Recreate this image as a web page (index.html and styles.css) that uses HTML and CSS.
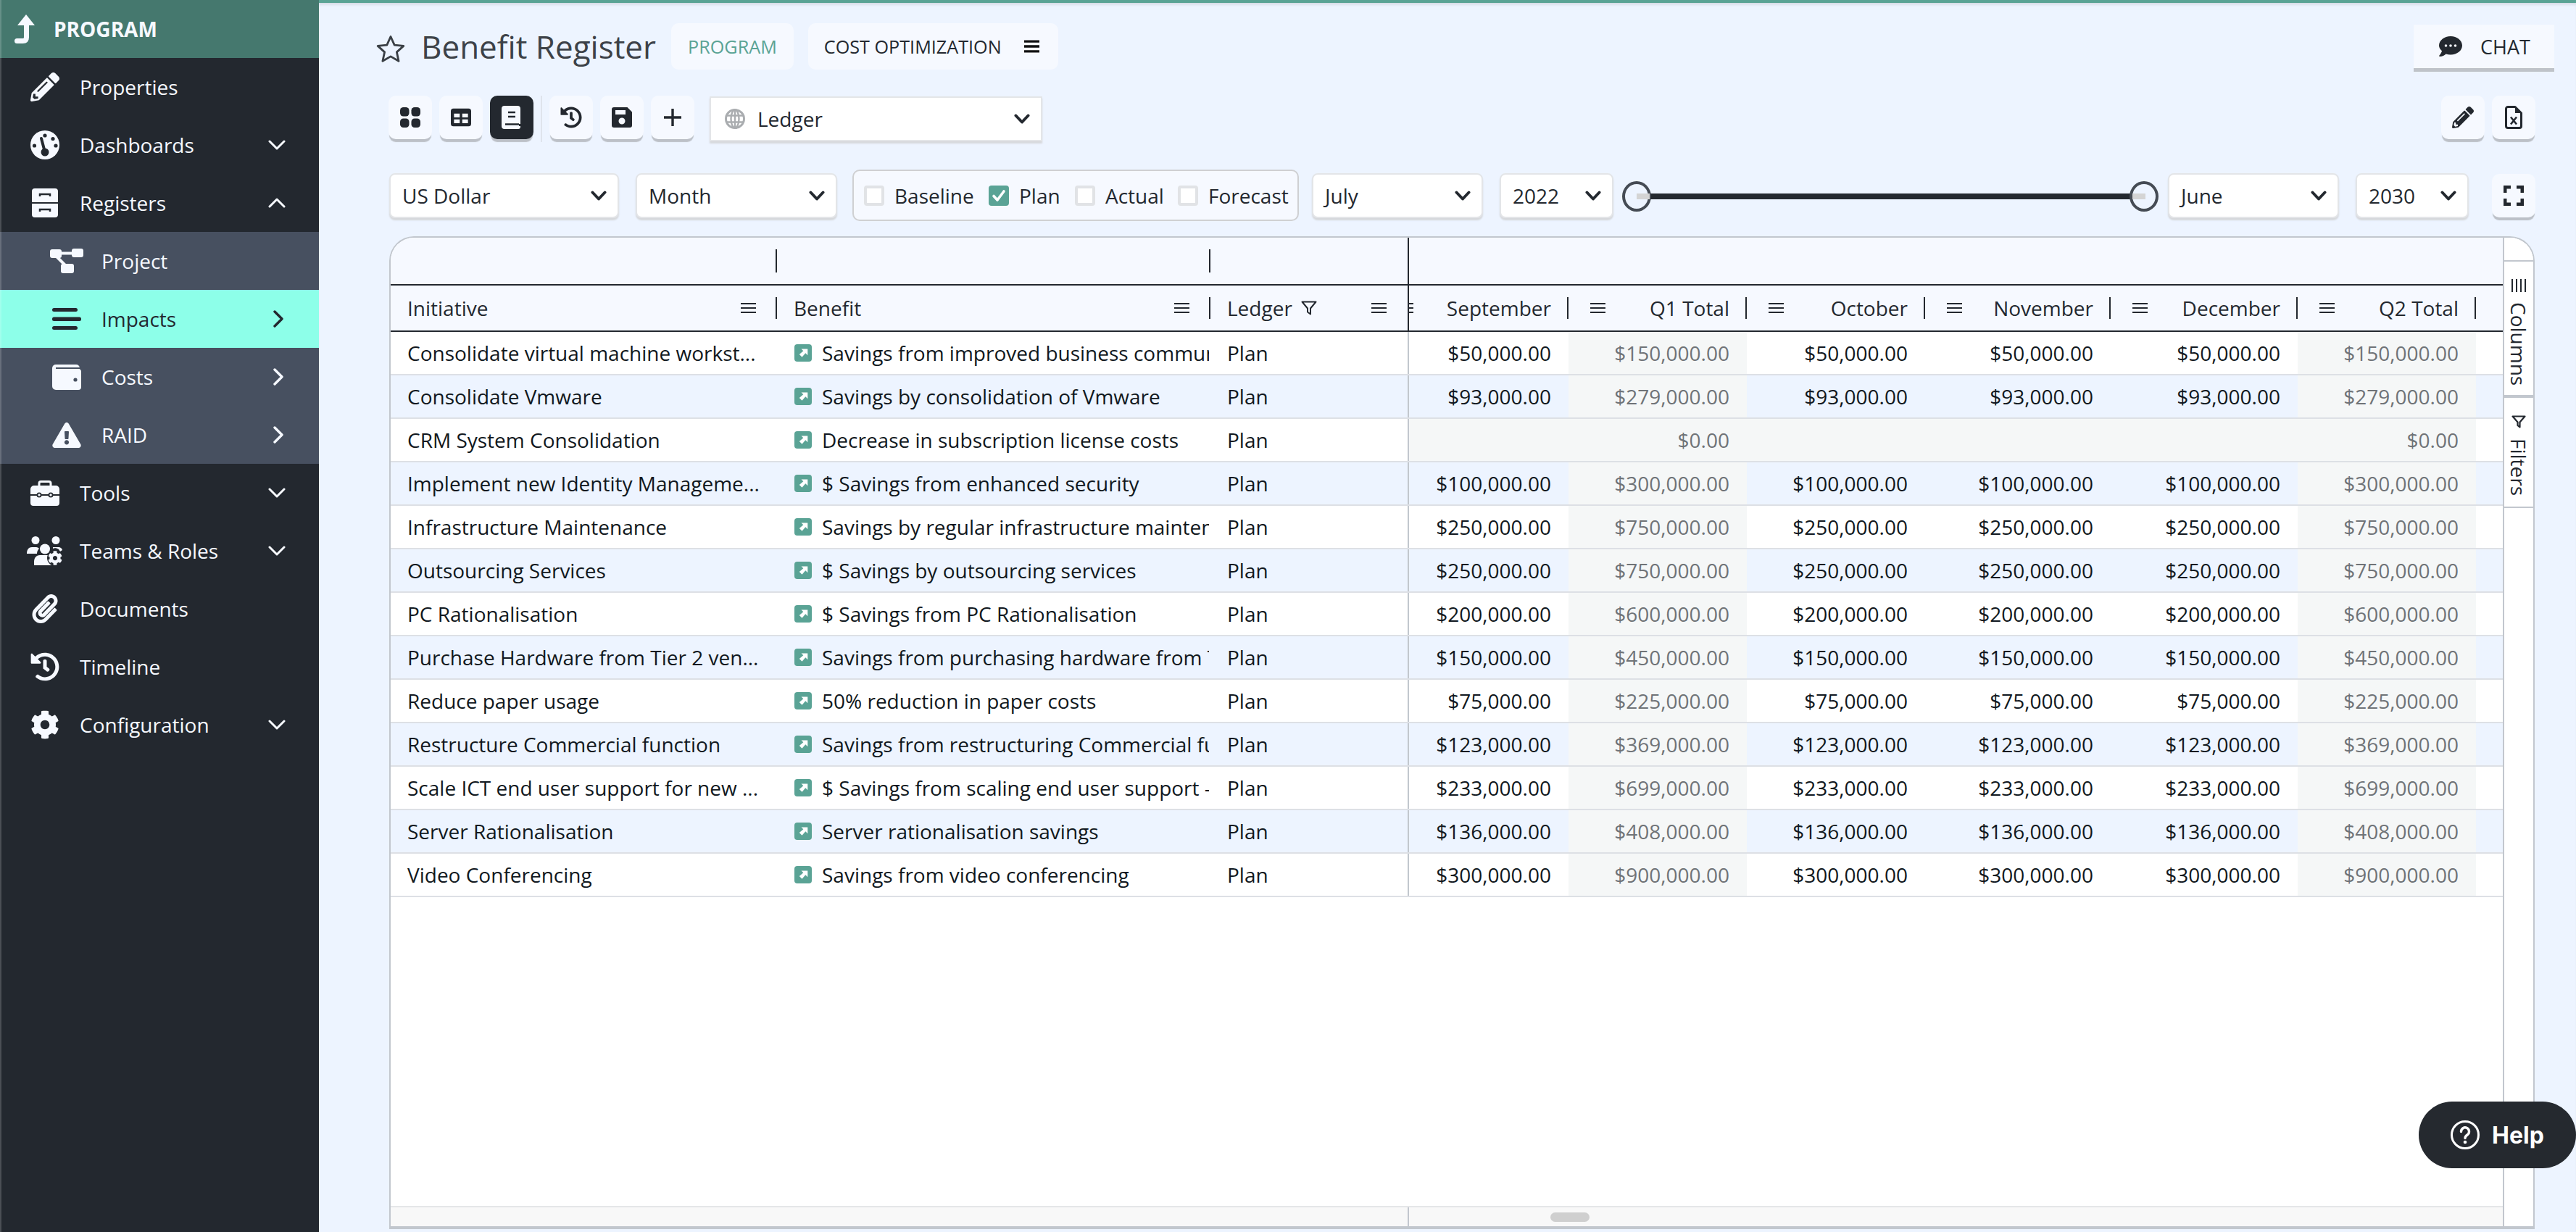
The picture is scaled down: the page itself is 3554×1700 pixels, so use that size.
FILE: index.html
```html
<!DOCTYPE html>
<html lang="en">
<head>
<meta charset="utf-8">
<title>Benefit Register</title>
<link rel="stylesheet" href="styles.css">
</head>
<body>
<svg class="defs" aria-hidden="true">
  <symbol id="i-pencil" viewBox="0 0 512 512"><path fill="currentColor" d="M497.9 142.1l-46.1 46.1c-4.7 4.7-12.3 4.7-17 0l-111-111c-4.7-4.7-4.7-12.3 0-17l46.1-46.1c18.7-18.7 49.1-18.7 67.9 0l60.1 60.1c18.8 18.7 18.8 49.1 0 67.9zM284.2 99.8L21.6 362.4.4 483.9c-2.9 16.4 11.4 30.6 27.8 27.8l121.5-21.3 262.6-262.6c4.7-4.7 4.7-12.3 0-17l-111-111c-4.8-4.7-12.4-4.7-17.1 0zM124.1 339.9c-5.5-5.5-5.5-14.3 0-19.8l154-154c5.5-5.5 14.3-5.5 19.8 0s5.5 14.3 0 19.8l-154 154c-5.5 5.5-14.3 5.5-19.8 0zM88 424h48v36.3l-64.5 11.3-31.1-31.1L51.7 376H88v48z"/></symbol>
  <symbol id="i-cog" viewBox="0 0 512 512"><path fill="currentColor" d="M487.4 315.7l-42.6-24.6c4.3-23.2 4.3-47 0-70.2l42.6-24.6c4.9-2.8 7.1-8.6 5.5-14-11.1-35.6-30-67.8-54.7-94.6-3.8-4.1-10-5.1-14.8-2.3L380.8 110c-17.9-15.4-38.5-27.3-60.8-35.1V25.8c0-5.6-3.9-10.5-9.4-11.7-36.7-8.2-74.3-7.8-109.2 0-5.5 1.2-9.4 6.1-9.4 11.7V75c-22.2 7.9-42.8 19.8-60.8 35.1L88.7 85.5c-4.9-2.8-11-1.9-14.8 2.3-24.7 26.7-43.6 58.9-54.7 94.6-1.7 5.4.6 11.2 5.5 14L67.3 221c-4.3 23.2-4.3 47 0 70.2l-42.6 24.6c-4.9 2.8-7.1 8.6-5.5 14 11.1 35.6 30 67.8 54.7 94.6 3.8 4.1 10 5.1 14.8 2.3l42.6-24.6c17.9 15.4 38.5 27.3 60.8 35.1v49.2c0 5.6 3.9 10.5 9.4 11.7 36.7 8.2 74.3 7.8 109.2 0 5.5-1.2 9.4-6.1 9.4-11.7v-49.2c22.2-7.9 42.8-19.8 60.8-35.1l42.6 24.6c4.9 2.8 11 1.9 14.8-2.3 24.7-26.7 43.6-58.9 54.7-94.6 1.5-5.5-.7-11.3-5.6-14.1zM256 336c-44.1 0-80-35.9-80-80s35.9-80 80-80 80 35.9 80 80-35.9 80-80 80z"/></symbol>
  <symbol id="i-history" viewBox="0 0 512 512"><path fill="currentColor" d="M504 255.531c.253 136.64-111.18 248.372-247.82 248.468-59.015.042-113.223-20.53-155.822-54.911-11.077-8.94-11.905-25.541-1.839-35.607l11.267-11.267c8.609-8.609 22.353-9.551 31.891-1.984C173.062 425.135 212.781 440 256 440c101.705 0 184-82.311 184-184 0-101.705-82.311-184-184-184-48.814 0-93.149 18.969-126.068 49.932l50.754 50.754c10.08 10.08 2.941 27.314-11.313 27.314H24c-8.837 0-16-7.163-16-16V38.627c0-14.254 17.234-21.393 27.314-11.314l49.372 49.372C129.209 34.136 189.552 8 256 8c136.81 0 247.747 110.78 248 247.531zm-180.912 78.784l9.823-12.63c8.138-10.463 6.253-25.542-4.21-33.679L288 256.349V152c0-13.255-10.745-24-24-24h-16c-13.255 0-24 10.745-24 24v135.651l65.409 50.874c10.463 8.137 25.541 6.253 33.679-4.21z"/></symbol>
  <symbol id="i-clip" viewBox="0 0 448 512"><path fill="currentColor" d="M43.246 466.142c-58.43-60.289-57.341-157.511 1.386-217.581L254.392 34c44.316-45.332 116.351-45.336 160.671 0 43.89 44.894 43.943 117.329 0 162.276L232.214 383.128c-29.855 30.537-78.633 30.111-107.982-.998-28.275-29.97-27.368-77.473 1.452-106.953l143.743-146.835c6.182-6.314 16.312-6.422 22.626-.241l22.861 22.379c6.315 6.182 6.422 16.312.241 22.626L171.427 319.927c-4.932 5.045-5.236 13.428-.648 18.292 4.372 4.634 11.245 4.711 15.688.165l182.849-186.851c19.613-20.062 19.613-52.725-.011-72.798-19.189-19.627-49.957-19.637-69.154 0L90.39 293.295c-34.763 35.56-35.299 93.12-1.191 128.313 34.01 35.093 88.985 35.137 123.058.286l172.06-175.999c6.177-6.319 16.307-6.433 22.626-.256l22.877 22.364c6.319 6.177 6.434 16.307.256 22.626l-172.06 175.998c-59.576 60.938-155.943 60.216-214.77-.485z"/></symbol>
  <symbol id="i-warn" viewBox="0 0 576 512"><path fill="currentColor" d="M569.517 440.013C587.975 472.007 564.806 512 527.94 512H48.054c-36.937 0-59.999-40.055-41.577-71.987L246.423 23.985c18.467-32.009 64.72-31.951 83.154 0l239.94 416.028zM288 354c-25.405 0-46 20.595-46 46s20.595 46 46 46 46-20.595 46-46-20.595-46-46-46zm-43.673-165.346l7.418 136c.347 6.364 5.609 11.346 11.982 11.346h48.546c6.373 0 11.635-4.982 11.982-11.346l7.418-136c.375-6.874-5.098-12.654-11.982-12.654h-63.383c-6.884 0-12.356 5.78-11.981 12.654z"/></symbol>
  <symbol id="i-down" viewBox="0 0 24 14"><path fill="none" stroke="currentColor" stroke-width="3" stroke-linecap="round" stroke-linejoin="round" d="M2 2l10 10L22 2"/></symbol>
  <symbol id="i-up" viewBox="0 0 24 14"><path fill="none" stroke="currentColor" stroke-width="3" stroke-linecap="round" stroke-linejoin="round" d="M2 12L12 2l10 10"/></symbol>
  <symbol id="i-right" viewBox="0 0 14 24"><path fill="none" stroke="currentColor" stroke-width="3.4" stroke-linecap="round" stroke-linejoin="round" d="M2 2l10 10L2 22"/></symbol>
  <symbol id="i-sel" viewBox="0 0 22 14"><path fill="none" stroke="currentColor" stroke-width="4" stroke-linecap="round" stroke-linejoin="round" d="M2.5 2.5L11 11.5l8.5-9"/></symbol>
  <symbol id="i-menu" viewBox="0 0 21 14"><path fill="currentColor" d="M0 0h21v2H0zM0 6h21v2H0zM0 12h21v2H0z"/></symbol>
  <symbol id="i-link" viewBox="0 0 24 24"><rect width="24" height="24" rx="4" fill="#5aa395"/><path fill="#fff" d="M9.500 6.500h8.800v8.800l-3-3-4.800 5.500-3.700-3.700 5.500-4.800z"/></symbol>
</svg>

<aside class="sidebar">
  <div class="brand">
    <svg class="brand-icon" viewBox="0 0 28 40"><path fill="none" stroke="currentColor" stroke-width="7" stroke-linecap="round" stroke-linejoin="round" d="M3.500 36.500h8q5 0 5-5V12"/><path fill="currentColor" d="M16 0l12 15H4z"/></svg>
    <span>PROGRAM</span>
  </div>
  <nav class="nav">
    <a class="nav-item"><span class="nav-icon"><svg class="ic-40"><use href="#i-pencil"/></svg></span><span class="nav-label">Properties</span></a>
    <a class="nav-item"><span class="nav-icon"><svg class="ic-40" viewBox="0 0 40 40"><circle cx="20" cy="20" r="20" fill="currentColor"/><circle cx="20" cy="7" r="2.600" fill="#23282f"/><circle cx="31" cy="11.500" r="2.600" fill="#23282f"/><circle cx="35" cy="21" r="2.600" fill="#23282f"/><circle cx="5.500" cy="21" r="2.600" fill="#23282f"/><circle cx="20" cy="30" r="5.500" fill="#23282f"/><path stroke="#23282f" stroke-width="4" stroke-linecap="round" d="M20 30L15 11"/></svg></span><span class="nav-label">Dashboards</span><svg class="chev"><use href="#i-down"/></svg></a>
    <a class="nav-item"><span class="nav-icon"><svg class="ic-reg" viewBox="0 0 36 40"><path fill="currentColor" d="M4 0h28a4 4 0 0 1 4 4v15H0V4a4 4 0 0 1 4-4zM0 21h36v15a4 4 0 0 1-4 4H4a4 4 0 0 1-4-4z"/><path fill="none" stroke="#23282f" stroke-width="2.500" d="M11 11V8h14v3M11 32v-3h14v3"/></svg></span><span class="nav-label">Registers</span><svg class="chev"><use href="#i-up"/></svg></a>
    <a class="nav-item sub"><span class="nav-icon"><svg class="ic-proj" viewBox="0 0 46 34"><rect y="1" width="16" height="12" rx="3" fill="currentColor"/><rect x="30" width="16" height="12" rx="3" fill="currentColor"/><rect x="15" y="21" width="18" height="13" rx="3" fill="currentColor"/><path stroke="currentColor" stroke-width="4" d="M14 6.500h18M8 10l14 14"/></svg></span><span class="nav-label">Project</span></a>
    <a class="nav-item sub active"><span class="nav-icon"><svg class="ic-bars" viewBox="0 0 40 30"><rect width="35" height="5" rx="2.500" fill="currentColor"/><rect y="12.500" width="40" height="5.500" rx="2.500" fill="currentColor"/><rect y="25" width="35" height="5" rx="2.500" fill="currentColor"/></svg></span><span class="nav-label">Impacts</span><svg class="chev-r"><use href="#i-right"/></svg></a>
    <a class="nav-item sub"><span class="nav-icon"><svg class="ic-wallet" viewBox="0 0 40 35"><rect width="38" height="14" rx="5" fill="currentColor"/><path stroke="#475060" stroke-width="2" d="M5 5h35"/><path fill="currentColor" d="M0 6h36a4 4 0 0 1 4 4v21a4 4 0 0 1-4 4H5a5 5 0 0 1-5-5z"/><circle cx="32" cy="21" r="2.600" fill="#475060"/></svg></span><span class="nav-label">Costs</span><svg class="chev-r"><use href="#i-right"/></svg></a>
    <a class="nav-item sub"><span class="nav-icon"><svg class="ic-wallet"><use href="#i-warn"/></svg></span><span class="nav-label">RAID</span><svg class="chev-r"><use href="#i-right"/></svg></a>
    <a class="nav-item"><span class="nav-icon"><svg class="ic-wallet" viewBox="0 0 40 35"><path fill="none" stroke="currentColor" stroke-width="3" d="M12 9V4a2.500 2.500 0 0 1 2.500-2.500h11A2.500 2.500 0 0 1 28 4v5"/><path fill="currentColor" d="M5 7h30a5 5 0 0 1 5 5v7H0v-7a5 5 0 0 1 5-5zM0 21h40v10a4 4 0 0 1-4 4H4a4 4 0 0 1-4-4z"/><circle cx="12" cy="20" r="3.500" fill="#23282f"/><circle cx="28" cy="20" r="3.500" fill="#23282f"/><circle cx="12" cy="20" r="1.700" fill="currentColor"/><circle cx="28" cy="20" r="1.700" fill="currentColor"/></svg></span><span class="nav-label">Tools</span><svg class="chev"><use href="#i-down"/></svg></a>
    <a class="nav-item"><span class="nav-icon"><svg class="ic-team" viewBox="0 0 50 40"><circle cx="12" cy="5.500" r="5.500" fill="currentColor"/><circle cx="40" cy="5.500" r="5.500" fill="currentColor"/><path fill="currentColor" d="M0 24c0-6 3-9 7-9h6c2 0 3 1 4 2-2 2-3 4-3 7zM36 15h8c2 0 4 1 5 4l-3 2-2-3c-3-2-6-2-8-1z"/><circle cx="25" cy="17.500" r="7" fill="currentColor"/><path fill="currentColor" d="M10 40v-5c0-6 4-9 8-9h14c1 0 2 0 3 1v13z"/><circle cx="39" cy="30" r="11" fill="#23282f"/><svg x="29" y="20" width="20" height="20"><use href="#i-cog"/></svg></svg></span><span class="nav-label">Teams &amp; Roles</span><svg class="chev"><use href="#i-down"/></svg></a>
    <a class="nav-item"><span class="nav-icon"><svg class="ic-40"><use href="#i-clip"/></svg></span><span class="nav-label">Documents</span></a>
    <a class="nav-item"><span class="nav-icon"><svg class="ic-40"><use href="#i-history"/></svg></span><span class="nav-label">Timeline</span></a>
    <a class="nav-item"><span class="nav-icon"><svg class="ic-40"><use href="#i-cog"/></svg></span><span class="nav-label">Configuration</span><svg class="chev"><use href="#i-down"/></svg></a>
  </nav>
</aside>

<main class="content">
  <header class="titlebar">
    <svg class="star" viewBox="0 0 40 38"><path fill="none" stroke="currentColor" stroke-width="2.800" stroke-linejoin="round" d="M20 2.500l5.200 11.600 12.600 1.300-9.400 8.500 2.600 12.400L20 29.900 8.900 36.300l2.700-12.400-9.400-8.500 12.600-1.300z"/></svg>
    <h1 class="title">Benefit Register</h1>
    <div class="pill pill-green">PROGRAM</div>
    <div class="pill pill-cost"><span>COST OPTIMIZATION</span><svg class="pill-menu" viewBox="0 0 22 18"><path fill="currentColor" d="M0 0h22v3.500H0zM0 7.250h22v3.500H0zM0 14.500h22V18H0z"/></svg></div>
    <button class="chat"><svg class="chat-ic" viewBox="0 0 32 28"><path fill="currentColor" d="M16 0c8.800 0 16 5.700 16 12.800S24.800 25.500 16 25.500c-2.300 0-4.400-.4-6.400-1.100C7.800 26 4.600 28 1 28c-.4 0-.7-.2-.8-.5s0-.7.200-.9c.1-.1 2.800-3 3.600-6.300C1.500 18 0 15.500 0 12.800 0 5.700 7.200 0 16 0z"/><circle cx="9.500" cy="13" r="1.800" fill="#f6f9ff"/><circle cx="16" cy="13" r="1.800" fill="#f6f9ff"/><circle cx="22.500" cy="13" r="1.800" fill="#f6f9ff"/></svg><span>CHAT</span></button>
  </header>

  <div class="toolbar">
    <button class="iconbtn"><svg class="ic-28" viewBox="0 0 28 28"><rect width="12.500" height="12.500" rx="4.500" fill="currentColor"/><rect x="15.500" width="12.500" height="12.500" rx="4.500" fill="currentColor"/><rect y="15.500" width="12.500" height="12.500" rx="4.500" fill="currentColor"/><rect x="15.500" y="15.500" width="12.500" height="12.500" rx="4.500" fill="currentColor"/></svg></button>
    <button class="iconbtn"><svg class="ic-28" viewBox="0 0 32 28"><path fill="currentColor" fill-rule="evenodd" d="M4 0h24a4 4 0 0 1 4 4v20a4 4 0 0 1-4 4H4a4 4 0 0 1-4-4V4a4 4 0 0 1 4-4zM5 8v6h9V8zM18 8v6h9V8zM5 17v6h9v-6zM18 17v6h9v-6z"/></svg></button>
    <button class="iconbtn on"><svg class="ic-book" viewBox="0 0 28 32"><path fill="currentColor" d="M4 0h18a4 4 0 0 1 4 4v21h-2v3h2v1a3 3 0 0 1-3 3H4a4 4 0 0 1-4-4V4a4 4 0 0 1 4-4z"/><path stroke="#23282f" stroke-width="2.400" d="M9 9h10M9 15h10M5 25.500h19"/></svg></button>
    <span class="divider"></span>
    <button class="iconbtn"><svg class="ic-30"><use href="#i-history"/></svg></button>
    <button class="iconbtn"><svg class="ic-28" viewBox="0 0 28 28"><path fill="currentColor" fill-rule="evenodd" d="M3 0h18.500L28 6.500V25a3 3 0 0 1-3 3H3a3 3 0 0 1-3-3V3a3 3 0 0 1 3-3zM5 4v6h14V4zM14 14.500a4.500 4.500 0 1 0 0 9 4.500 4.500 0 0 0 0-9z"/></svg></button>
    <button class="iconbtn"><svg class="ic-28" viewBox="0 0 28 28"><path fill="currentColor" d="M12.300 2h3.400v10.300H26v3.400H15.700V26h-3.400V15.700H2v-3.400h10.300z"/></svg></button>
    <div class="select ledger"><svg class="globe" viewBox="0 0 28 28"><circle cx="14" cy="14" r="12.500" fill="none" stroke="#aaadb0" stroke-width="3"/><ellipse cx="14" cy="14" rx="5.500" ry="12.500" fill="none" stroke="#aaadb0" stroke-width="2.400"/><path stroke="#aaadb0" stroke-width="2.400" d="M2 9.500h24M2 18.500h24M14 1v26"/></svg><span class="sel-text">Ledger</span><svg class="sel-chev"><use href="#i-sel"/></svg></div>
    <div class="tool-right">
      <button class="iconbtn"><svg class="ic-30"><use href="#i-pencil"/></svg></button>
      <button class="iconbtn"><svg class="ic-file" viewBox="0 0 24 32"><path fill="none" stroke="currentColor" stroke-width="3" stroke-linejoin="round" d="M4 1.500h10L22.500 10v18a2.500 2.500 0 0 1-2.500 2.500H4A2.500 2.500 0 0 1 1.500 28V4A2.500 2.500 0 0 1 4 1.500z"/><path fill="currentColor" d="M14 1.500V10h8.500z"/><path stroke="currentColor" stroke-width="2.600" d="M8 15.500l8 10M16 15.500l-8 10"/></svg></button>
    </div>
  </div>

  <div class="filters">
    <div class="select w-cur"><span class="sel-text">US Dollar</span><svg class="sel-chev"><use href="#i-sel"/></svg></div>
    <div class="select w-per"><span class="sel-text">Month</span><svg class="sel-chev"><use href="#i-sel"/></svg></div>
    <div class="checks">
      <label class="check"><span class="box"></span>Baseline</label>
      <label class="check"><span class="box checked"><svg viewBox="0 0 28 28"><path fill="none" stroke="#fff" stroke-width="3.600" stroke-linecap="round" stroke-linejoin="round" d="M7 14.500l5 5.500 9-12"/></svg></span>Plan</label>
      <label class="check"><span class="box"></span>Actual</label>
      <label class="check"><span class="box"></span>Forecast</label>
    </div>
    <div class="select w-mon1"><span class="sel-text">July</span><svg class="sel-chev"><use href="#i-sel"/></svg></div>
    <div class="select w-yr1"><span class="sel-text">2022</span><svg class="sel-chev"><use href="#i-sel"/></svg></div>
    <div class="slider"><span class="handle h-left"></span><span class="track"></span><span class="handle h-right"></span></div>
    <div class="select w-mon2"><span class="sel-text">June</span><svg class="sel-chev"><use href="#i-sel"/></svg></div>
    <div class="select w-yr2"><span class="sel-text">2030</span><svg class="sel-chev"><use href="#i-sel"/></svg></div>
    <button class="iconbtn fs"><svg class="ic-28" viewBox="0 0 28 28"><path fill="none" stroke="currentColor" stroke-width="4.500" d="M2.250 10V2.250H10M18 2.250h7.750V10M25.750 18v7.750H18M10 25.750H2.250V18"/></svg></button>
  </div>

  <section class="grid">
    <div class="grid-main">
      <div class="group-row">
        <div class="pin dark"><div class="gcell c-init"><i class="sep sep-g"></i></div><div class="gcell c-ben"><i class="sep sep-g"></i></div><div class="gcell c-led"></div></div>
        <div class="center"></div>
      </div>
      <div class="head-row">
        <div class="pin dark">
          <div class="hcell c-init"><span class="hlabel">Initiative</span><svg class="hmenu"><use href="#i-menu"/></svg><i class="sep"></i></div>
          <div class="hcell c-ben"><span class="hlabel">Benefit</span><svg class="hmenu"><use href="#i-menu"/></svg><i class="sep"></i></div>
          <div class="hcell c-led"><span class="hlabel">Ledger</span><svg class="hfilter" viewBox="0 0 22 20"><path fill="none" stroke="currentColor" stroke-width="2" stroke-linejoin="round" d="M1.500 1.500h19L13 10.500v8l-4-3v-5z"/></svg><svg class="hmenu led-menu"><use href="#i-menu"/></svg></div>
        </div>
        <div class="center">
          <div class="hcell r c-sep"><svg class="hmenu-l"><use href="#i-menu"/></svg><span class="hlabel">September</span><i class="sep"></i></div>
          <div class="hcell r c-q"><svg class="hmenu-l"><use href="#i-menu"/></svg><span class="hlabel">Q1 Total</span><i class="sep"></i></div>
          <div class="hcell r c-q"><svg class="hmenu-l"><use href="#i-menu"/></svg><span class="hlabel">October</span><i class="sep"></i></div>
          <div class="hcell r c-nov"><svg class="hmenu-l"><use href="#i-menu"/></svg><span class="hlabel">November</span><i class="sep"></i></div>
          <div class="hcell r c-dec"><svg class="hmenu-l"><use href="#i-menu"/></svg><span class="hlabel">December</span><i class="sep"></i></div>
          <div class="hcell r c-q"><svg class="hmenu-l"><use href="#i-menu"/></svg><span class="hlabel">Q2 Total</span><i class="sep"></i></div>
          <div class="hcell c-rest"><svg class="hmenu-l"><use href="#i-menu"/></svg></div>
        </div>
      </div>

      <div class="row">
        <div class="pin"><div class="cell c-init">Consolidate virtual machine workst...</div><div class="cell c-ben"><svg class="link"><use href="#i-link"/></svg><span class="clip">Savings from improved business communi</span></div><div class="cell c-led">Plan</div></div>
        <div class="center"><div class="cell num c-sep">$50,000.00</div><div class="cell num total c-q">$150,000.00</div><div class="cell num c-q">$50,000.00</div><div class="cell num c-nov">$50,000.00</div><div class="cell num c-dec">$50,000.00</div><div class="cell num total c-q">$150,000.00</div><div class="cell c-rest"></div></div>
      </div>
      <div class="row alt">
        <div class="pin"><div class="cell c-init">Consolidate Vmware</div><div class="cell c-ben"><svg class="link"><use href="#i-link"/></svg><span class="clip">Savings by consolidation of Vmware</span></div><div class="cell c-led">Plan</div></div>
        <div class="center"><div class="cell num c-sep">$93,000.00</div><div class="cell num total c-q">$279,000.00</div><div class="cell num c-q">$93,000.00</div><div class="cell num c-nov">$93,000.00</div><div class="cell num c-dec">$93,000.00</div><div class="cell num total c-q">$279,000.00</div><div class="cell c-rest"></div></div>
      </div>
      <div class="row">
        <div class="pin"><div class="cell c-init">CRM System Consolidation</div><div class="cell c-ben"><svg class="link"><use href="#i-link"/></svg><span class="clip">Decrease in subscription license costs</span></div><div class="cell c-led">Plan</div></div>
        <div class="center"><div class="cell num total c-sep"></div><div class="cell num total c-q">$0.00</div><div class="cell num total c-q"></div><div class="cell num total c-nov"></div><div class="cell num total c-dec"></div><div class="cell num total c-q">$0.00</div><div class="cell c-rest"></div></div>
      </div>
      <div class="row alt">
        <div class="pin"><div class="cell c-init">Implement new Identity Manageme...</div><div class="cell c-ben"><svg class="link"><use href="#i-link"/></svg><span class="clip">$ Savings from enhanced security</span></div><div class="cell c-led">Plan</div></div>
        <div class="center"><div class="cell num c-sep">$100,000.00</div><div class="cell num total c-q">$300,000.00</div><div class="cell num c-q">$100,000.00</div><div class="cell num c-nov">$100,000.00</div><div class="cell num c-dec">$100,000.00</div><div class="cell num total c-q">$300,000.00</div><div class="cell c-rest"></div></div>
      </div>
      <div class="row">
        <div class="pin"><div class="cell c-init">Infrastructure Maintenance</div><div class="cell c-ben"><svg class="link"><use href="#i-link"/></svg><span class="clip">Savings by regular infrastructure mainten</span></div><div class="cell c-led">Plan</div></div>
        <div class="center"><div class="cell num c-sep">$250,000.00</div><div class="cell num total c-q">$750,000.00</div><div class="cell num c-q">$250,000.00</div><div class="cell num c-nov">$250,000.00</div><div class="cell num c-dec">$250,000.00</div><div class="cell num total c-q">$750,000.00</div><div class="cell c-rest"></div></div>
      </div>
      <div class="row alt">
        <div class="pin"><div class="cell c-init">Outsourcing Services</div><div class="cell c-ben"><svg class="link"><use href="#i-link"/></svg><span class="clip">$ Savings by outsourcing services</span></div><div class="cell c-led">Plan</div></div>
        <div class="center"><div class="cell num c-sep">$250,000.00</div><div class="cell num total c-q">$750,000.00</div><div class="cell num c-q">$250,000.00</div><div class="cell num c-nov">$250,000.00</div><div class="cell num c-dec">$250,000.00</div><div class="cell num total c-q">$750,000.00</div><div class="cell c-rest"></div></div>
      </div>
      <div class="row">
        <div class="pin"><div class="cell c-init">PC Rationalisation</div><div class="cell c-ben"><svg class="link"><use href="#i-link"/></svg><span class="clip">$ Savings from PC Rationalisation</span></div><div class="cell c-led">Plan</div></div>
        <div class="center"><div class="cell num c-sep">$200,000.00</div><div class="cell num total c-q">$600,000.00</div><div class="cell num c-q">$200,000.00</div><div class="cell num c-nov">$200,000.00</div><div class="cell num c-dec">$200,000.00</div><div class="cell num total c-q">$600,000.00</div><div class="cell c-rest"></div></div>
      </div>
      <div class="row alt">
        <div class="pin"><div class="cell c-init">Purchase Hardware from Tier 2 ven...</div><div class="cell c-ben"><svg class="link"><use href="#i-link"/></svg><span class="clip">Savings from purchasing hardware from T</span></div><div class="cell c-led">Plan</div></div>
        <div class="center"><div class="cell num c-sep">$150,000.00</div><div class="cell num total c-q">$450,000.00</div><div class="cell num c-q">$150,000.00</div><div class="cell num c-nov">$150,000.00</div><div class="cell num c-dec">$150,000.00</div><div class="cell num total c-q">$450,000.00</div><div class="cell c-rest"></div></div>
      </div>
      <div class="row">
        <div class="pin"><div class="cell c-init">Reduce paper usage</div><div class="cell c-ben"><svg class="link"><use href="#i-link"/></svg><span class="clip">50% reduction in paper costs</span></div><div class="cell c-led">Plan</div></div>
        <div class="center"><div class="cell num c-sep">$75,000.00</div><div class="cell num total c-q">$225,000.00</div><div class="cell num c-q">$75,000.00</div><div class="cell num c-nov">$75,000.00</div><div class="cell num c-dec">$75,000.00</div><div class="cell num total c-q">$225,000.00</div><div class="cell c-rest"></div></div>
      </div>
      <div class="row alt">
        <div class="pin"><div class="cell c-init">Restructure Commercial function</div><div class="cell c-ben"><svg class="link"><use href="#i-link"/></svg><span class="clip">Savings from restructuring Commercial fu</span></div><div class="cell c-led">Plan</div></div>
        <div class="center"><div class="cell num c-sep">$123,000.00</div><div class="cell num total c-q">$369,000.00</div><div class="cell num c-q">$123,000.00</div><div class="cell num c-nov">$123,000.00</div><div class="cell num c-dec">$123,000.00</div><div class="cell num total c-q">$369,000.00</div><div class="cell c-rest"></div></div>
      </div>
      <div class="row">
        <div class="pin"><div class="cell c-init">Scale ICT end user support for new ...</div><div class="cell c-ben"><svg class="link"><use href="#i-link"/></svg><span class="clip">$ Savings from scaling end user support -</span></div><div class="cell c-led">Plan</div></div>
        <div class="center"><div class="cell num c-sep">$233,000.00</div><div class="cell num total c-q">$699,000.00</div><div class="cell num c-q">$233,000.00</div><div class="cell num c-nov">$233,000.00</div><div class="cell num c-dec">$233,000.00</div><div class="cell num total c-q">$699,000.00</div><div class="cell c-rest"></div></div>
      </div>
      <div class="row alt">
        <div class="pin"><div class="cell c-init">Server Rationalisation</div><div class="cell c-ben"><svg class="link"><use href="#i-link"/></svg><span class="clip">Server rationalisation savings</span></div><div class="cell c-led">Plan</div></div>
        <div class="center"><div class="cell num c-sep">$136,000.00</div><div class="cell num total c-q">$408,000.00</div><div class="cell num c-q">$136,000.00</div><div class="cell num c-nov">$136,000.00</div><div class="cell num c-dec">$136,000.00</div><div class="cell num total c-q">$408,000.00</div><div class="cell c-rest"></div></div>
      </div>
      <div class="row">
        <div class="pin"><div class="cell c-init">Video Conferencing</div><div class="cell c-ben"><svg class="link"><use href="#i-link"/></svg><span class="clip">Savings from video conferencing</span></div><div class="cell c-led">Plan</div></div>
        <div class="center"><div class="cell num c-sep">$300,000.00</div><div class="cell num total c-q">$900,000.00</div><div class="cell num c-q">$300,000.00</div><div class="cell num c-nov">$300,000.00</div><div class="cell num c-dec">$300,000.00</div><div class="cell num total c-q">$900,000.00</div><div class="cell c-rest"></div></div>
      </div>

      <div class="grid-empty"></div>
      <div class="hscroll"><div class="hscroll-pin"></div><div class="hscroll-track"><span class="thumb"></span></div></div>
    </div>
    <div class="side">
      <div class="side-top"></div>
      <div class="side-tab tab-columns"><svg class="side-ic" viewBox="0 0 20 18"><path fill="currentColor" d="M0 0h2v18H0zM6 0h2v18H6zM12 0h2v18h-2zM18 0h2v18h-2z"/></svg><span class="side-text">Columns</span></div>
      <div class="side-tab tab-filters"><svg class="side-ic" viewBox="0 0 20 18"><path fill="none" stroke="currentColor" stroke-width="2.200" stroke-linejoin="round" d="M1.500 1.500h17L11.500 9.500v7l-3-2.500V9.500z"/></svg><span class="side-text">Filters</span></div>
      <div class="side-rest"></div>
    </div>
  </section>
</main>

<button class="help"><svg class="help-ic" viewBox="0 0 40 40"><circle cx="20" cy="20" r="18.500" fill="none" stroke="currentColor" stroke-width="3"/><path fill="none" stroke="currentColor" stroke-width="3.400" stroke-linecap="round" d="M14.500 15.500a5.500 5.500 0 1 1 8.500 4.500c-2 1.300-3 2.300-3 4.500"/><circle cx="20" cy="30" r="2.300" fill="currentColor"/></svg><span>Help</span></button>
</body>
</html>
```
FILE: styles.css
```css
* { box-sizing: border-box; }
html, body { margin: 0; height: 100%; }
body {
  display: flex;
  width: 3554px;
  height: 1700px;
  overflow: hidden;
  background: #edf4ff;
  font-family: "Open Sans", "Noto Sans", sans-serif;
  font-size: 28px;
  color: #23282f;
}
.defs { position: absolute; width: 0; height: 0; }
button { font: inherit; color: inherit; border: 0; padding: 0; cursor: pointer; }

/* Sidebar */
.sidebar { position: relative; flex: 0 0 440px; background: #23282f; color: #f6f9ff; }
.sidebar::before { content: ""; position: absolute; left: 0; top: 0; bottom: 0; width: 2px; background: rgba(255,255,255,.18); }
.brand { display: flex; align-items: center; height: 80px; padding-left: 20px; background: #45786e; font-weight: 700; }
.brand-icon { width: 28px; height: 40px; margin-right: 26px; }
.nav-item { display: flex; align-items: center; height: 80px; padding-left: 37px; }
.nav-item.sub { padding-left: 67px; background: #475060; }
.nav-item.active { background: #8dffe9; color: #23282f; }
.nav-icon { display: flex; justify-content: center; align-items: center; flex: 0 0 50px; height: 50px; margin-right: 23px; }
.nav-label { flex: 1; }
.ic-40 { width: 40px; height: 40px; }
.ic-reg { width: 36px; height: 40px; }
.ic-proj { width: 46px; height: 34px; }
.ic-bars { width: 40px; height: 30px; }
.ic-wallet { width: 40px; height: 35px; }
.ic-team { width: 50px; height: 40px; }
.chev { width: 24px; height: 14px; margin-right: 46px; }
.chev-r { width: 14px; height: 24px; margin-right: 49px; }

/* Main */
.content { flex: 1; min-width: 0; border-top: 4px solid #5aa395; box-shadow: inset 0 4px 4px -2px rgba(0,0,0,.12); }
.titlebar { display: flex; align-items: flex-start; height: 128px; padding: 28px 30px 0 79px; }
.star { width: 40px; height: 38px; margin: 16px 22px 0 0; color: #3a3f45; }
.title { margin: 0 21px 0 0; font-size: 44px; line-height: 64px; font-weight: 400; color: #3d4248; }
.pill { display: flex; align-items: center; height: 64px; background: #f6f9ff; border-radius: 10px; font-size: 25.200px; color: #23282f; }
.pill-green { padding: 0 23px; margin-right: 20px; color: #5aa395; }
.pill-cost { padding: 0 26px 0 22px; }
.pill-menu { width: 21px; height: 18px; margin-left: 31px; color: #111; }
.chat { display: flex; align-items: center; margin: 2px 0 0 auto; width: 194px; height: 60px; padding-left: 35px; background: #f6f9ff; box-shadow: 0 5px 0 #bfc3c9; font-size: 27px; }
.chat-ic { width: 32px; height: 28px; margin-right: 25px; }

.toolbar { display: flex; align-items: flex-start; gap: 10px; height: 102px; padding: 0 56px 0 96px; }
.iconbtn { display: flex; align-items: center; justify-content: center; flex: 0 0 60px; height: 60px; background: #f6f9ff; border-radius: 10px; box-shadow: 0 5px 1px -1px #bcc0c7; color: #23282f; }
.iconbtn.on { background: #23282f; color: #f6f9ff; }
.ic-28 { width: 28px; height: 28px; }
.ic-30 { width: 30px; height: 30px; }
.ic-book { width: 28px; height: 32px; }
.ic-file { width: 24px; height: 32px; }
.divider { flex: 0 0 2px; height: 64px; background: #dfe4ec; }
.select { display: flex; align-items: center; height: 62px; padding: 0 15px 0 16px; background: #fff; border: 2px solid #e3e5e8; border-radius: 8px; box-shadow: 0 3px 2px #d6d8dc; }
.sel-text { flex: 1; }
.sel-chev { width: 22px; height: 14px; color: #23282f; }
.ledger { width: 459px; margin: 1px 0 0 11px; border-radius: 0; padding-left: 19px; }
.globe { width: 28px; height: 28px; margin-right: 17px; }
.tool-right { display: flex; gap: 10px; margin-left: auto; }

.filters { display: flex; align-items: center; height: 71px; margin-bottom: 21px; padding: 0 56px 0 97px; }
.w-cur { width: 317px; margin-right: 23px; }
.w-per { width: 278px; margin-right: 21px; }
.checks { display: flex; align-items: center; width: 616px; height: 71px; margin-right: 18px; padding-left: 14px; background: #f6f9ff; border: 2px solid #cfd0d2; border-radius: 10px; }
.check { display: flex; align-items: center; }
.check:nth-child(1) { width: 172px; }
.check:nth-child(2) { width: 119px; }
.check:nth-child(3) { width: 142px; }
.box { display: block; width: 28px; height: 28px; margin-right: 14px; background: #fff; border: 4px solid #e1e3e6; border-radius: 4px; }
.box.checked { background: #5aa395; border: 0; }
.box svg { display: block; width: 28px; height: 28px; }
.w-mon1 { width: 236px; margin-right: 23px; }
.w-yr1 { width: 157px; margin-right: 12px; }
.slider { display: flex; align-items: center; flex: 1; margin: 3px 13px 0 0; }
.track { flex: 1; height: 8px; margin: 0 -2px; background: #23282f; }
.handle { position: relative; z-index: 1; flex: 0 0 40px; height: 42px; background: #edf4ff; border: 4px solid #454b54; border-radius: 50%; }
.handle::after { content: ""; position: absolute; top: 13px; width: 18px; height: 8px; background: #d4d4d4; }
.h-left::after { left: 16px; }
.h-right::after { left: 0; }
.w-mon2 { width: 236px; margin-right: 23px; }
.w-yr2 { width: 156px; margin-right: 32px; }

/* Grid */
.grid { display: flex; height: 1370px; margin: 0 57px 0 97px; background: #fff; border: 2px solid #c2c7ce; border-bottom-width: 4px; border-radius: 34px 34px 0 0; overflow: hidden; }
.grid-main { display: flex; flex-direction: column; flex: 1; min-width: 0; }
.group-row, .head-row, .row { display: flex; flex: none; }
.group-row { height: 66px; background: #f6f9ff; border-bottom: 2px solid #23282f; }
.head-row { height: 64px; background: #f6f9ff; border-bottom: 2px solid #23282f; }
.row { height: 60px; border-bottom: 2px solid #dde0e5; background: #fff; }
.row.alt { background: #edf4ff; }
.pin { display: flex; flex: 0 0 1405px; border-right: 2px solid #c2c7ce; }
.pin.dark { border-right-color: #23282f; }
.center { display: flex; flex: 1; min-width: 0; overflow: hidden; }
.c-init { flex: 0 0 533px; }
.c-ben { flex: 0 0 598px; }
.c-led { flex: 1; min-width: 0; }
.c-sep { flex: 0 0 265px; margin-left: -45px; }
.c-q { flex: 0 0 246px; }
.c-nov { flex: 0 0 256px; }
.c-dec { flex: 0 0 258px; }
.c-rest { flex: 1 0 80px; }
.gcell { display: flex; align-items: center; justify-content: flex-end; }
.hcell { display: flex; align-items: center; padding-left: 23px; color: #23282f; }
.hcell.r { padding-left: 0; }
.hlabel { flex: 1; white-space: nowrap; }
.hcell.r .hlabel { flex: 0 0 auto; margin-left: auto; margin-right: 22px; }
.hmenu { flex: none; width: 21px; height: 14px; margin-right: 27px; }
.hmenu-l { flex: none; width: 21px; height: 14px; margin-left: 30px; }
.hfilter { flex: none; width: 22px; height: 20px; margin-right: 75px; }
.led-menu { margin-right: 23px; }
.c-led .hlabel { flex: 0 0 auto; margin-right: 12px; }
.sep { flex: none; width: 2px; height: 30px; background: #23282f; }
.sep-g { height: 32px; }
.cell { display: flex; align-items: center; min-width: 0; color: #111820; white-space: nowrap; overflow: hidden; }
.c-init.cell, .c-led.cell { padding-left: 23px; }
.c-ben.cell { padding-left: 24px; padding-right: 2px; }
.link { flex: none; width: 24px; height: 24px; margin-right: 14px; }
.clip { overflow: hidden; }
.num { justify-content: flex-end; padding-right: 24px; }
.total { background: #f5f7f7; color: #6f7377; }
.grid-empty { flex: 1; }
.hscroll { display: flex; flex: none; height: 28px; background: #f8f8f8; border-top: 2px solid #e5e6e8; }
.hscroll-pin { flex: 0 0 1405px; border-right: 2px solid #c2c7ce; }
.hscroll-track { flex: 1; padding: 7px 0 0 195px; }
.thumb { display: block; width: 54px; height: 13px; background: #cfcfcf; border-radius: 7px; }
.side { display: flex; flex-direction: column; flex: 0 0 42px; background: #fff; border-left: 2px solid #c2c7ce; }
.side-top { flex: 0 0 33px; border-bottom: 2px solid #c2c7ce; }
.side-tab { display: flex; flex-direction: column; align-items: center; padding-top: 24px; border-bottom: 2px solid #c2c7ce; color: #23282f; }
.tab-columns { flex: 0 0 188px; border-bottom-width: 4px; }
.tab-filters { flex: 0 0 152px; }
.side-rest { flex: 1; }
.side-ic { flex: none; width: 20px; height: 18px; margin-bottom: 14px; }
.side-text { writing-mode: vertical-rl; line-height: 34px; font-size: 28px; }

/* Help */
.help { position: absolute; left: 3337px; top: 1520px; display: flex; align-items: center; width: 217px; height: 92px; padding-left: 44px; background: #25292f; color: #fff; border-radius: 46px; font-family: Inter, sans-serif; font-weight: 700; font-size: 32px; }
.help-ic { width: 40px; height: 40px; margin-right: 17px; }
```
